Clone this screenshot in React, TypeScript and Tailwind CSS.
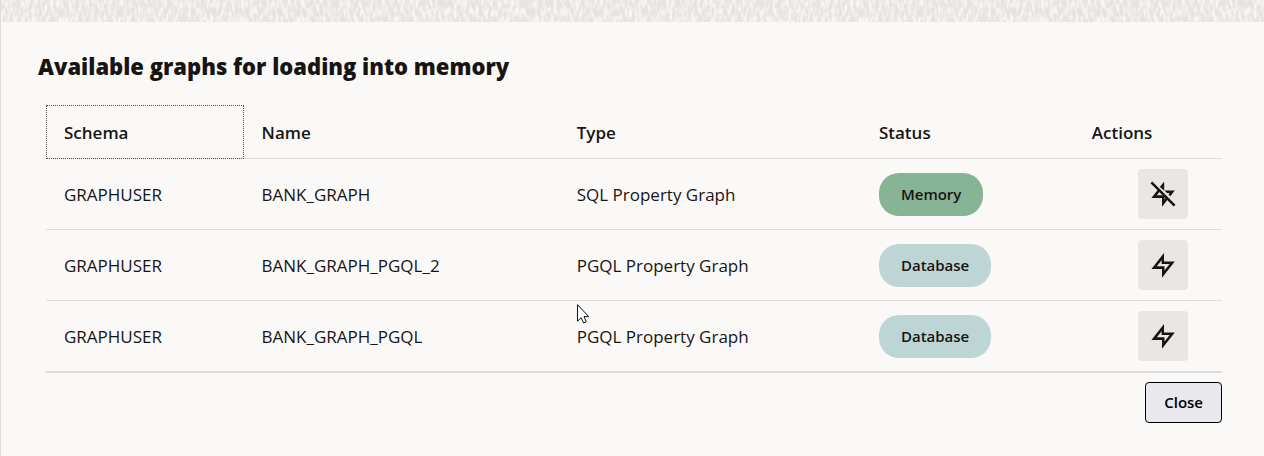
import type { ReactNode } from "react";

type Graph = {
  schema: string;
  name: string;
  type: string;
  status: "Memory" | "Database";
};

const graphs: Graph[] = [
  { schema: "GRAPHUSER", name: "BANK_GRAPH", type: "SQL Property Graph", status: "Memory" },
  { schema: "GRAPHUSER", name: "BANK_GRAPH_PGQL_2", type: "PGQL Property Graph", status: "Database" },
  { schema: "GRAPHUSER", name: "BANK_GRAPH_PGQL", type: "PGQL Property Graph", status: "Database" },
];

const boltPath =
  "M13 0 .4 16H11V24.8L23.8 8.4H13ZM10.6 7.2V11H18.6L13.5 17.4V13.3H5.8Z";

function TextureStrip() {
  return (
    <svg className="block h-[22px] w-full bg-[#e5e4e2]" aria-hidden="true">
      <filter id="weave" x="0" y="0" width="100%" height="100%" colorInterpolationFilters="sRGB">
        <feTurbulence type="fractalNoise" baseFrequency="0.32 0.12" numOctaves="2" seed="7" />
        <feColorMatrix values="0 0 0 0 0.97  0 0 0 0 0.965  0 0 0 0 0.96  3.2 0 0 0 -1.25" />
      </filter>
      <rect width="100%" height="100%" filter="url(#weave)" />
    </svg>
  );
}

function BoltIcon() {
  return (
    <svg className="size-6 overflow-visible" viewBox="0 0 24 24" fill="currentColor" fillRule="evenodd" aria-hidden="true">
      <path d={boltPath} />
    </svg>
  );
}

function BoltOffIcon() {
  return (
    <svg className="size-6 overflow-visible" viewBox="0 0 24 24" fill="currentColor" fillRule="evenodd" aria-hidden="true">
      <path d={boltPath} />
      <path d="M1.5-1.5 25 22" stroke="#e8e7e5" strokeWidth="2.6" />
      <path d="M.4.4 23.6 23.6" stroke="currentColor" strokeWidth="2.5" />
      <path d="M13.2 0 8.8 4.9 13.2 8.4Z" />
    </svg>
  );
}

function Pointer() {
  return (
    <svg className="pointer-events-none absolute top-[3px] left-[18px] h-5 w-3" viewBox="0 0 12 20" aria-hidden="true">
      <path d="M.5.7V17.2L4.2 13.7 6.6 19 9.3 17.8 7 12.6H11.7Z" fill="#fff" stroke="#111" strokeWidth="1" />
    </svg>
  );
}

function Head({ children, className = "" }: { children: ReactNode; className?: string }) {
  return <th scope="col" className={`h-[54px] px-[18px] pt-0.5 text-left font-semibold ${className}`}>{children}</th>;
}

export default function App() {
  return (
    <main className="min-h-screen border-l border-[#dedddb] bg-[#fbf9f8] font-['Open_Sans','Noto_Sans',sans-serif] text-[#161513]">
      <TextureStrip />
      <section className="pt-7 pr-[42px] pb-8 pl-[45px]">
        <h1 className="-ml-2 text-[22px] leading-8 font-extrabold">Available graphs for loading into memory</h1>
        <table className="mt-[23px] w-full table-fixed border-separate border-spacing-0 border-b border-[#dedddb] text-[17px] leading-6 [&_td]:border-b [&_td]:border-[#dedddb] [&_th]:border-b [&_th]:border-[#dedddb]">
          <colgroup>
            <col className="w-[16.8%]" />
            <col className="w-[26.8%]" />
            <col className="w-[25.7%]" />
            <col className="w-[18.1%]" />
            <col className="w-[12.6%]" />
          </colgroup>
          <thead>
            <tr>
              <Head className="outline outline-dotted -outline-offset-1 outline-[#55534f]">Schema</Head>
              <Head>Name</Head>
              <Head>Type</Head>
              <Head>Status</Head>
              <Head>Actions</Head>
            </tr>
          </thead>
          <tbody>
            {graphs.map((graph, index) => (
              <tr key={graph.name} className="h-[71px]">
                <td className="px-[18px] pt-0.5">{graph.schema}</td>
                <td className="px-[18px] pt-0.5">{graph.name}</td>
                <td className="relative px-[18px] pt-0.5">
                  {graph.type}
                  {index === 2 && <Pointer />}
                </td>
                <td className="px-[18px]">
                  <span
                    className={`inline-flex h-[43px] items-center rounded-[20px] px-[22px] align-middle text-[15px] font-semibold ${
                      graph.status === "Memory" ? "bg-[#87b495]" : "bg-[#bdd6d5]"
                    }`}
                  >
                    {graph.status}
                  </span>
                </td>
                <td className="pr-[34px]">
                  <button
                    type="button"
                    aria-label={graph.status === "Memory" ? "Remove from memory" : "Load into memory"}
                    className="ml-auto flex size-[50px] items-center justify-center rounded bg-[#e8e7e5]"
                  >
                    {graph.status === "Memory" ? <BoltOffIcon /> : <BoltIcon />}
                  </button>
                </td>
              </tr>
            ))}
          </tbody>
        </table>
        <div className="mt-[9px] flex justify-end">
          <button type="button" className="h-[41px] rounded border border-black bg-[#e9e8ed] px-[18px] text-[15px] font-semibold text-black">
            Close
          </button>
        </div>
      </section>
    </main>
  );
}
